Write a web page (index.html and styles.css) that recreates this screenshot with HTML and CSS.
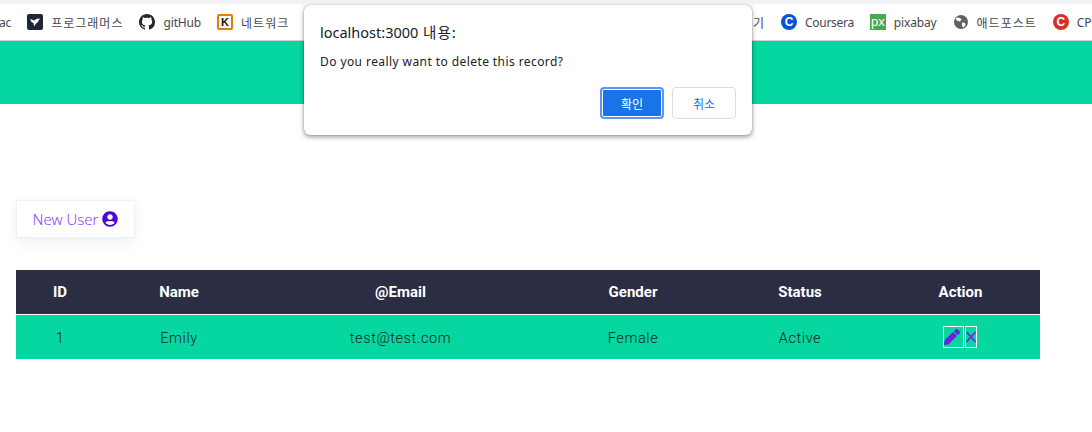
FILE: index.html
```html
<!DOCTYPE html>
<html lang="en">
<head>
    <meta charset="UTF-8">
    <meta name="viewport" content="width=device-width, initial-scale=1.0">
    <title>Users</title>
    <link rel="stylesheet" href="styles.css">
</head>
<body>
    <div class="browser-top"></div>
    <nav class="bookmarks">
        <div class="bookmark-group">
            <span class="bookmark-cut">ac</span>
            <a class="bookmark">
                <svg class="fav" viewBox="0 0 16 16"><rect width="16" height="16" rx="2" fill="#1e2738"/><path d="M3 5l4.500 1.500L9 5l4-.5-2.500 4L9 9.500 7 12.500 6.500 9 4.500 8z" fill="#fff"/></svg>
                <span class="ko">프로그래머스</span>
            </a>
            <a class="bookmark">
                <svg class="fav" viewBox="0 0 16 16"><path fill="#24292e" d="M8 0C3.580 0 0 3.580 0 8c0 3.540 2.290 6.530 5.470 7.590.4.070.55-.17.55-.38 0-.19-.01-.82-.01-1.490-2.010.37-2.530-.49-2.690-.94-.09-.23-.48-.94-.82-1.130-.28-.15-.68-.52-.01-.53.63-.01 1.080.58 1.230.82.72 1.210 1.870.87 2.330.66.07-.52.28-.87.51-1.070-1.780-.2-3.640-.89-3.640-3.950 0-.87.31-1.590.82-2.150-.08-.2-.36-1.020.08-2.120 0 0 .67-.21 2.200.82.64-.18 1.320-.27 2-.27.68 0 1.360.09 2 .27 1.530-1.040 2.200-.82 2.200-.82.44 1.100.16 1.920.08 2.120.51.56.82 1.270.82 2.150 0 3.070-1.870 3.750-3.650 3.950.29.25.54.73.54 1.480 0 1.070-.01 1.930-.01 2.200 0 .21.15.46.55.38A8.013 8.013 0 0016 8c0-4.420-3.580-8-8-8z"/></svg>
                gitHub
            </a>
            <a class="bookmark">
                <span class="fav fav-k">K</span>
                <span class="ko">네트워크</span>
            </a>
        </div>
        <div class="bookmark-group">
            <span class="bookmark-cut ko">기</span>
            <a class="bookmark">
                <span class="fav fav-c fav-blue">C</span>
                <span class="tight">Coursera</span>
            </a>
            <a class="bookmark">
                <span class="fav fav-px">px</span>
                pixabay
            </a>
            <a class="bookmark">
                <svg class="fav" viewBox="0 0 16 16"><circle cx="8" cy="8" r="7" fill="#5f6368"/><path d="M4 3.500l3 .5 1.500 1.500L7 7.500l-2.500-.5L2.500 5zM9 8.500l3 .5.5 2-2 2.500-1.500-1.500z" fill="#fff"/></svg>
                <span class="ko">애드포스트</span>
            </a>
            <a class="bookmark">
                <span class="fav fav-c fav-red">C</span>
                CP
            </a>
        </div>
    </nav>

    <header class="app-header"></header>

    <main class="content">
        <button class="new-user">
            New User
            <svg class="user-icon" viewBox="0 0 496 512"><path d="M248 8C111 8 0 119 0 256s111 248 248 248 248-111 248-248S385 8 248 8zm0 96c48.600 0 88 39.400 88 88s-39.400 88-88 88-88-39.400-88-88 39.400-88 88-88zm0 344c-58.700 0-111.300-26.600-146.500-68.200 18.800-35.400 55.600-59.800 98.500-59.800 2.400 0 4.800.4 7.100 1.100 13 4.200 26.600 6.900 40.900 6.900 14.300 0 28-2.700 40.900-6.900 2.300-.7 4.700-1.100 7.100-1.100 42.900 0 79.700 24.400 98.500 59.800C359.300 421.400 306.700 448 248 448z"/></svg>
        </button>

        <table class="users">
            <thead>
                <tr>
                    <th class="col-id">ID</th>
                    <th class="col-name">Name</th>
                    <th class="col-email">@Email</th>
                    <th class="col-gender">Gender</th>
                    <th class="col-status">Status</th>
                    <th class="col-action">Action</th>
                </tr>
            </thead>
            <tbody>
                <tr>
                    <td>1</td>
                    <td>Emily</td>
                    <td>test@test.com</td>
                    <td>Female</td>
                    <td>Active</td>
                    <td>
                        <div class="actions">
                            <button class="action-btn edit">
                                <svg viewBox="0 0 512 512"><path d="M497.900 142.100l-46.100 46.100c-4.700 4.700-12.300 4.700-17 0l-111-111c-4.700-4.700-4.700-12.300 0-17l46.100-46.100c18.700-18.700 49.100-18.700 67.900 0l60.100 60.100c18.800 18.700 18.800 49.100 0 67.900zM284.200 99.800L21.600 362.400.4 483.900c-2.900 16.400 11.400 30.600 27.800 27.800l121.500-21.300 262.600-262.600c4.700-4.700 4.700-12.300 0-17l-111-111c-4.800-4.700-12.400-4.700-17.100 0z"/></svg>
                            </button>
                            <button class="action-btn remove">
                                <svg viewBox="0 0 10 12"><path d="M0.500 1l9 10M9.500 1l-9 10"/></svg>
                            </button>
                        </div>
                    </td>
                </tr>
            </tbody>
        </table>
    </main>

    <div class="dialog">
        <h2 class="dialog-title">localhost:3000 <span class="ko">내용:</span></h2>
        <p class="dialog-text">Do you really want to delete this record?</p>
        <div class="dialog-buttons">
            <button class="btn-ok">확인</button>
            <button class="btn-cancel">취소</button>
        </div>
    </div>
</body>
</html>
```

FILE: styles.css
```css
* {
    margin: 0;
    padding: 0;
    box-sizing: border-box;
}

html, body {
    width: 100%;
    height: 100%;
    overflow: hidden;
    background-color: #fff;
    font-family: Roboto, Arial, sans-serif;
}

.browser-top {
    height: 4px;
    background-color: #f1f3f4;
}

.bookmarks {
    height: 37px;
    background-color: #fff;
    border-bottom: 1px solid #d0d2d4;
    display: flex;
    justify-content: space-between;
    align-items: center;
    font-family: "Noto Sans", "Noto Sans CJK KR", sans-serif;
    font-size: 12px;
    letter-spacing: -0.15px;
    color: #45484c;
    white-space: nowrap;
    overflow: hidden;
}

.ko {
    font-family: "Noto Sans CJK KR", sans-serif;
    letter-spacing: 1px;
}

.tight {
    letter-spacing: -0.3px;
}

.bookmark-group {
    display: flex;
    align-items: center;
    gap: 16px;
}

.bookmark-group:first-child {
    margin-left: -1px;
}

.bookmark-group:last-child {
    margin-right: -16px;
    width: 355px;
}

.bookmark {
    display: flex;
    align-items: center;
    gap: 8px;
}

.fav {
    width: 16px;
    height: 16px;
    flex-shrink: 0;
    letter-spacing: 0;
}

.fav-k {
    border: 2px solid #e87a00;
    border-radius: 2px;
    background-color: #fff;
    color: #111;
    font: bold 11px/12px "Liberation Sans", sans-serif;
    text-align: center;
}

.fav-c {
    border-radius: 50%;
    color: #fff;
    font: bold 12px/16px "Liberation Sans", sans-serif;
    text-align: center;
}

.fav-blue {
    background-color: #0756d1;
}

.fav-red {
    background-color: #d93025;
}

.fav-px {
    background-color: #4aa84f;
    color: #fff;
    font: 13px/15px "Liberation Sans", sans-serif;
    text-align: center;
}

.app-header {
    height: 63px;
    background-color: #06d6a0;
}

.content {
    padding: 96px 0 0 16px;
}

.new-user {
    display: flex;
    align-items: center;
    gap: 4px;
    width: 119px;
    height: 38px;
    justify-content: center;
    background-color: #fff;
    border: 1px solid #edf2f7;
    box-shadow: 0 4px 12px rgba(80, 100, 140, 0.1);
    color: #8a3ffc;
    font-family: "Noto Sans", sans-serif;
    font-size: 15px;
    font-weight: 300;
}

.user-icon {
    width: 16px;
    height: 16px;
    fill: #4f05df;
}

.users {
    width: 1024px;
    margin-top: 32px;
    border-collapse: collapse;
    table-layout: fixed;
    text-align: center;
}

.users th {
    height: 44px;
    background-color: #2b2d42;
    border-bottom: 1px solid #fff;
    color: #fff;
    font-size: 15px;
    font-weight: 700;
}

.users td {
    height: 45px;
    padding-top: 3px;
    background-color: #06d6a0;
    color: #06231f;
    font-size: 14.500px;
    font-weight: 300;
    letter-spacing: 0.6px;
}

.col-id { width: 88px; }
.col-name { width: 150px; }
.col-email { width: 293px; }
.col-gender { width: 172px; }
.col-status { width: 162px; }
.col-action { width: 159px; }

.actions {
    display: flex;
    justify-content: center;
    gap: 1px;
    margin-top: -3px;
    padding-right: 2px;
}

.action-btn {
    display: flex;
    align-items: center;
    justify-content: center;
    height: 22px;
    background: none;
    border: 1px solid #fff;
}

.edit {
    width: 21px;
    justify-content: flex-start;
}

.edit svg {
    width: 16px;
    height: 16px;
    fill: #6f1fe0;
}

.remove {
    width: 12px;
}

.remove svg {
    width: 10px;
    height: 12px;
    flex-shrink: 0;
    stroke: #7a22e6;
    stroke-width: 1.600;
    fill: none;
}

.dialog {
    position: absolute;
    left: 304px;
    top: 5px;
    width: 448px;
    height: 130px;
    padding: 16px;
    background-color: #fff;
    border-radius: 6px;
    box-shadow: 0 0 1px rgba(0, 0, 0, 0.5), 0 2px 5px rgba(0, 0, 0, 0.4);
    font-family: "Noto Sans", "Noto Sans CJK KR", sans-serif;
    color: #202124;
}

.dialog-title {
    font-size: 14.500px;
    font-weight: 400;
    line-height: 22px;
}

.dialog-title .ko {
    margin-left: 1px;
}

.dialog-text {
    margin-top: 10px;
    font-size: 12px;
    line-height: 18px;
    letter-spacing: 0.42px;
}

.dialog-buttons {
    display: flex;
    justify-content: flex-end;
    gap: 8px;
    margin-top: 16px;
}

.dialog-buttons button {
    width: 64px;
    height: 32px;
    border-radius: 4px;
    font-family: "Noto Sans CJK KR", sans-serif;
    font-size: 12px;
}

.btn-ok {
    background-color: #1a73e8;
    color: #fff;
    border: 2px solid #5a97f0;
    box-shadow: inset 0 0 0 1px #fff;
}

.btn-cancel {
    background-color: #fff;
    color: #1a73e8;
    border: 1px solid #dadce0;
}
```
